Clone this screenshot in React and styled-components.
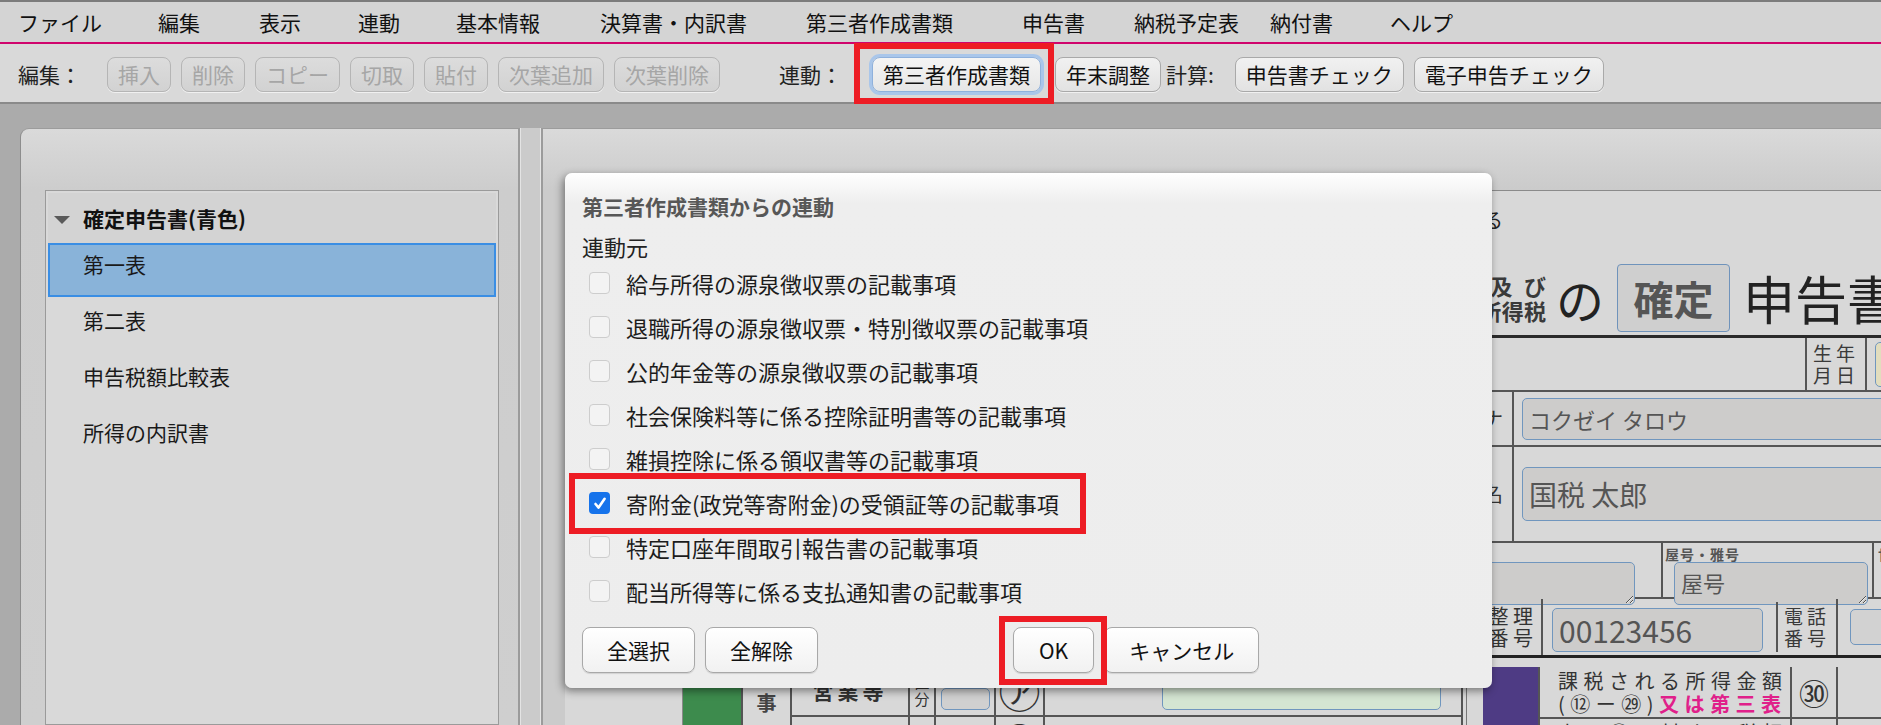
import React from "react";
import styled, { createGlobalStyle, css } from "styled-components";

const GlobalStyle = createGlobalStyle`
  html, body { margin: 0; padding: 0; }
  body {
    font-family: "Noto Sans CJK JP", "Noto Sans", sans-serif;
    background: #ababab;
    overflow: hidden;
  }
  * { box-sizing: border-box; }
`;

const Page = styled.div`
  position: relative;
  width: 1881px;
  height: 725px;
  overflow: hidden;
  display: flex;
  flex-direction: column;
  font-size: 21px;
  color: #111;
  background: #ababab;
`;

/* ---------- menu bar ---------- */
const MenuBar = styled.nav`
  height: 44px;
  flex-shrink: 0;
  display: flex;
  align-items: center;
  padding-left: 18px;
  background: #d4d4d4;
  border-top: 2px solid #7c7c7c;
  border-bottom: 2px solid #d0056d;
`;
const MenuItem = styled.span`
  margin-left: ${(p) => p.$ml}px;
  font-size: 21px;
  line-height: 28px;
  color: #111;
  white-space: nowrap;
`;

/* ---------- toolbar ---------- */
const Toolbar = styled.div`
  height: 60px;
  flex-shrink: 0;
  display: flex;
  align-items: center;
  padding: 2px 0 0 18px;
  background: #d9d9d9;
  border-bottom: 2px solid #8a8a8a;
`;
const ToolLabel = styled.span`
  margin-left: ${(p) => p.$ml || 0}px;
  font-size: 21px;
  line-height: 30px;
  color: #222;
  white-space: nowrap;
`;
const ToolButton = styled.button`
  margin-left: ${(p) => p.$ml ?? 10}px;
  height: 35px;
  padding: 0 10px;
  font-family: inherit;
  font-size: 21px;
  line-height: 33px;
  white-space: nowrap;
  border-radius: 8px;
  border: 1px solid #a9a9a9;
  color: #111;
  background: linear-gradient(#f1f1f1, #e2e2e2);
  box-shadow: 0 1px 0 rgba(255, 255, 255, 0.6);
  ${(p) =>
    p.disabled &&
    css`
      color: #a6a6a6;
      border-color: #b5b5b5;
      background: linear-gradient(#dcdcdc, #d2d2d2);
    `}
  ${(p) =>
    p.$focused &&
    css`
      border-color: #8fb1dc;
      background: linear-gradient(#f4f4f4, #e6e6e6);
      box-shadow: 0 0 0 3px #a9c6ea;
    `}
`;

/* red annotation frames */
const Marked = styled.span`
  position: relative;
  display: ${(p) => (p.$block ? "flex" : "inline-flex")};
  width: ${(p) => (p.$block ? "fit-content" : "auto")};
  margin-left: ${(p) => p.$ml || 0}px;
  &::after {
    content: "";
    position: absolute;
    top: ${(p) => p.$t}px;
    right: ${(p) => p.$r}px;
    bottom: ${(p) => p.$b}px;
    left: ${(p) => p.$l}px;
    border: 6px solid #ed1c24;
    pointer-events: none;
    z-index: 5;
  }
`;

/* ---------- workspace ---------- */
const Workspace = styled.div`
  flex: 1;
  display: flex;
  padding-top: 24px;
  min-height: 0;
`;
const LeftPanel = styled.aside`
  margin-left: 20px;
  width: 498px;
  flex-shrink: 0;
  border-radius: 9px 0 0 0;
  border-top: 1px solid #9c9c9c;
  border-left: 1px solid #8d8d8d;
  background: linear-gradient(#dadada 0, #cdcdcd 60px, #cfcfcf 100%);
  padding: 61px 19px 0 24px;
  display: flex;
  flex-direction: column;
`;
const Splitter = styled.div`
  width: 25px;
  flex-shrink: 0;
  background: #cbcbcb;
  border-left: 2px solid #9b9b9b;
  border-right: 2px solid #9b9b9b;
  box-shadow: inset 1px 0 0 #e4e4e4, inset -1px 0 0 #e4e4e4;
`;
const Tree = styled.div`
  flex: 1;
  border: 1px solid #9a9a9a;
  background: #d9d9d9;
  padding: 2px;
`;
const TreeHeader = styled.div`
  height: 50px;
  display: flex;
  align-items: center;
  padding-left: 6px;
  background: #d3d3d3;
  font-weight: 700;
  font-size: 21px;
  color: #111;
`;
const Caret = styled.span`
  width: 0;
  height: 0;
  border-left: 8px solid transparent;
  border-right: 8px solid transparent;
  border-top: 8px solid #5a5a5a;
  margin: 4px 13px 0 0;
`;
const TreeRow = styled.div`
  height: 56px;
  padding: 6px 0 0 35px;
  line-height: 30px;
  font-size: 21px;
  color: #1a1a1a;
  ${(p) =>
    p.$selected &&
    css`
      height: 54px;
      margin-bottom: 2px;
      background: #89b3d9;
      box-shadow: inset 0 0 0 2px #3a8ee4;
    `}
`;

const RightPanel = styled.main`
  flex: 1;
  min-width: 0;
  overflow: hidden;
  border-top: 1px solid #9c9c9c;
  background: linear-gradient(#dadada 0, #cbcbcb 60px, #cbcbcb 100%);
  padding: 61px 0 0 22px;
`;

/* ---------- form sheet (behind dialog) ---------- */
const Sheet = styled.div`
  width: 1500px;
  background: #d8d8d8;
  border-top: 1px solid #8a8a8a;
  color: #333;
`;
const HeaderBlock = styled.div`
  height: 147px;
  border-bottom: 3px solid #2a2a2a;
`;
const NoteLine = styled.div`
  width: 938px;
  padding-top: 14px;
  line-height: 30px;
  font-size: 20px;
  text-align: right;
  color: #222;
  white-space: nowrap;
  overflow: hidden;
`;
const TitleLine = styled.div`
  display: flex;
  align-items: center;
  height: 70px;
  margin-top: 28px;
`;
const TwoLine = styled.div`
  margin-left: 825px;
  width: 156px;
  font-size: 22px;
  line-height: 25px;
  font-weight: 700;
  color: #3a3a3a;
  text-align: justify;
  text-align-last: justify;
`;
const TitleNo = styled.span`
  margin-left: 10px;
  font-size: 48px;
  line-height: 60px;
  color: #222;
`;
const KindBox = styled.div`
  margin-left: 13px;
  width: 113px;
  height: 68px;
  display: flex;
  align-items: center;
  justify-content: center;
  border: 1px solid #6f93bb;
  border-radius: 4px;
  background: #cfcfcf;
  font-size: 40px;
  font-weight: 700;
  color: #555;
`;
const TitleText = styled.span`
  margin-left: 13px;
  font-size: 52px;
  line-height: 60px;
  color: #222;
  white-space: nowrap;
`;

const FormRow = styled.div`
  display: flex;
  align-items: ${(p) => p.$align || "center"};
  height: ${(p) => p.$h}px;
  border-bottom: ${(p) => p.$line || 2}px solid ${(p) => (p.$line === 3 ? "#222" : "#555")};
`;
const Spacer = styled.div`
  width: ${(p) => p.$w}px;
  flex-shrink: 0;
  align-self: stretch;
  border-right: ${(p) => (p.$line ? "1px solid #8a8a8a" : "none")};
`;
const LabelCell = styled.div`
  width: ${(p) => p.$w}px;
  flex-shrink: 0;
  align-self: stretch;
  display: flex;
  align-items: center;
  justify-content: flex-end;
  padding-right: ${(p) => p.$pr ?? 9}px;
  border-right: 2px solid #555;
  font-size: 20px;
  line-height: 22px;
  color: #333;
  text-align: right;
  white-space: pre;
`;
const StackLabel = styled.div`
  width: ${(p) => p.$w}px;
  flex-shrink: 0;
  align-self: stretch;
  display: flex;
  flex-direction: column;
  align-items: center;
  justify-content: center;
  border-left: ${(p) => (p.$bl ? "2px solid #555" : "none")};
  border-right: 2px solid #555;
  font-size: 19px;
  line-height: 22px;
  letter-spacing: 4px;
  color: #3a3a3a;
`;
const Field = styled.div`
  flex-shrink: 0;
  margin-left: ${(p) => p.$ml ?? 8}px;
  margin-top: ${(p) => p.$mt ?? 0}px;
  width: ${(p) => p.$w}px;
  height: ${(p) => p.$h}px;
  align-self: ${(p) => (p.$bottom ? "flex-end" : "auto")};
  margin-bottom: ${(p) => (p.$bottom ? 5 : 0)}px;
  display: flex;
  align-items: center;
  padding-left: 6px;
  border: 1px solid #7096be;
  border-radius: 5px;
  background: ${(p) => p.$bg || "#cdcccb"};
  font-size: ${(p) => p.$fs || 22}px;
  color: #555;
  white-space: nowrap;
  overflow: hidden;
`;
const Area = styled.textarea`
  flex-shrink: 0;
  margin-left: ${(p) => p.$ml ?? 0}px;
  width: ${(p) => p.$w}px;
  height: 43px;
  padding: 4px 6px;
  border: 1px solid #7096be;
  border-radius: 5px;
  background: #cdcccb;
  font-family: inherit;
  font-size: 22px;
  line-height: 30px;
  color: #555;
  resize: both;
  outline: none;
`;
const SmallCell = styled.div`
  width: ${(p) => p.$w}px;
  flex-shrink: 0;
  align-self: stretch;
  border-right: ${(p) => (p.$noRight ? "none" : "2px solid #555")};
  display: flex;
  flex-direction: column;
  align-items: flex-start;
  padding: 3px 0 0 ${(p) => p.$pl ?? 0}px;
`;
const TinyLabel = styled.div`
  margin-left: ${(p) => p.$ml || 0}px;
  font-size: 14px;
  line-height: 16px;
  font-weight: 700;
  color: #555;
  letter-spacing: 1px;
  white-space: nowrap;
`;

const Bottom = styled.div`
  display: flex;
  align-items: flex-start;
`;
const LeftCol = styled.div`
  width: 898px;
  margin-top: 7px;
  display: flex;
  border-right: 2px solid #555;
  box-shadow: 3px 0 0 #d8d8d8, 4px 0 0 #777;
`;
const ColorBar = styled.div`
  width: ${(p) => p.$w}px;
  flex-shrink: 0;
  align-self: stretch;
  min-height: 200px;
  background: ${(p) => p.$c};
`;
const VertLabel = styled.div`
  width: 51px;
  flex-shrink: 0;
  border-left: 2px solid #555;
  border-right: 2px solid #555;
  padding-top: 13px;
  display: flex;
  flex-direction: column;
  align-items: center;
  font-size: 20px;
  line-height: 50px;
  font-weight: 700;
  color: #444;
`;
const Rows = styled.div`
  flex: 1;
  display: flex;
  flex-direction: column;
`;
const ItemRow = styled.div`
  display: flex;
  height: ${(p) => p.$h}px;
  border-bottom: 2px solid #555;
`;
const Cell = styled.div`
  width: ${(p) => (p.$w ? `${p.$w}px` : "auto")};
  flex: ${(p) => (p.$w ? "0 0 auto" : "1")};
  display: flex;
  flex-direction: ${(p) => (p.$col ? "column" : "row")};
  align-items: center;
  justify-content: ${(p) => p.$justify || "center"};
  border-right: ${(p) => (p.$noRight ? "none" : "2px solid #555")};
  font-size: ${(p) => p.$fs || 20}px;
  line-height: ${(p) => p.$lh || 22}px;
  font-weight: ${(p) => (p.$bold ? 700 : 400)};
  letter-spacing: ${(p) => p.$ls || 0}px;
  color: #333;
  white-space: nowrap;
`;
const RightCol = styled.div`
  margin-left: 20px;
  margin-top: 9px;
  display: flex;
  flex: 1;
`;
const RightRows = styled.div`
  flex: 1;
  display: flex;
  flex-direction: column;
  border-left: 2px solid #555;
`;
const TaxLabel = styled.div`
  width: 252px;
  flex-shrink: 0;
  padding: 2px 0 0 18px;
  border-right: 2px solid #555;
  font-size: 20px;
  line-height: 23px;
  letter-spacing: 5.5px;
  color: #333;
  white-space: nowrap;
  overflow: hidden;
`;
const Pink = styled.span`
  color: #e0208a;
  font-weight: 700;
`;

/* ---------- dialog ---------- */
const Dialog = styled.section`
  position: absolute;
  left: 565px;
  top: 173px;
  width: 927px;
  height: 515px;
  z-index: 3;
  padding: 18px 0 14px 0;
  border-radius: 7px;
  background: linear-gradient(#ffffff 0, #eeeeee 30px, #ededed 100%);
  box-shadow: -2px 3px 8px rgba(0, 0, 0, 0.45);
  display: flex;
  flex-direction: column;
`;
const DialogTitle = styled.h2`
  margin: 0;
  padding-left: 17px;
  font-size: 21px;
  line-height: 30px;
  font-weight: 700;
  color: #575757;
`;
const SourceLabel = styled.div`
  margin-top: 10px;
  padding-left: 17px;
  font-size: 22px;
  line-height: 30px;
  color: #222;
`;
const CheckList = styled.div`
  padding-left: 24px;
  display: flex;
  flex-direction: column;
`;
const CheckItem = styled.label`
  height: 44px;
  display: flex;
  align-items: center;
  gap: 16px;
  font-size: 22px;
  color: #1c1c1c;
  white-space: nowrap;
`;
const Box = styled.span`
  width: 21px;
  height: 22px;
  flex-shrink: 0;
  border-radius: 4px;
  border: 1.5px solid #cdcdcd;
  background: #f3f3f3;
  display: flex;
  align-items: center;
  justify-content: center;
  ${(p) =>
    p.$checked &&
    css`
      border: none;
      background: #1673eb;
    `}
`;
const ButtonRow = styled.div`
  margin-top: 14px;
  padding-left: 17px;
  display: flex;
  align-items: center;
`;
const DlgButton = styled.button`
  margin-left: ${(p) => p.$ml ?? 0}px;
  height: 46px;
  padding: 0 ${(p) => p.$px ?? 24}px;
  border: 1px solid #a8a8a8;
  border-radius: 8px;
  background: linear-gradient(#ffffff, #f1f1f1);
  box-shadow: 0 1px 1px rgba(0, 0, 0, 0.12);
  font-family: inherit;
  font-size: 21px;
  color: #111;
  white-space: nowrap;
`;

const Check = () => (
  <svg width="14" height="15" viewBox="0 0 14 15">
    <path d="M2.5 8 L5.6 11.6 L11.6 2.8" fill="none" stroke="#fff" strokeWidth="2.6" strokeLinecap="round" strokeLinejoin="round" />
  </svg>
);

const menus = [
  ["ファイル", 0],
  ["編集", 56],
  ["表示", 59],
  ["連動", 57],
  ["基本情報", 56],
  ["決算書・内訳書", 60],
  ["第三者作成書類", 59],
  ["申告書", 69],
  ["納税予定表", 49],
  ["納付書", 31],
  ["ヘルプ", 57],
];
const editButtons = ["挿入", "削除", "コピー", "切取", "貼付", "次葉追加", "次葉削除"];
const sources = [
  "給与所得の源泉徴収票の記載事項",
  "退職所得の源泉徴収票・特別徴収票の記載事項",
  "公的年金等の源泉徴収票の記載事項",
  "社会保険料等に係る控除証明書等の記載事項",
  "雑損控除に係る領収書等の記載事項",
  "寄附金(政党等寄附金)の受領証等の記載事項",
  "特定口座年間取引報告書の記載事項",
  "配当所得等に係る支払通知書の記載事項",
];
const incomeRows = [
  { name: "営業等", mark: "㋐" },
  { name: "農業", mark: "㋑" },
];

export default function App() {
  return (
    <Page>
      <GlobalStyle />
      <MenuBar>
        {menus.map(([m, ml]) => (
          <MenuItem key={m} $ml={ml}>
            {m}
          </MenuItem>
        ))}
      </MenuBar>

      <Toolbar>
        <ToolLabel>編集：</ToolLabel>
        {editButtons.map((b, i) => (
          <ToolButton key={b} disabled $ml={i === 0 ? 26 : 10}>
            {b}
          </ToolButton>
        ))}
        <ToolLabel $ml={59}>連動：</ToolLabel>
        <Marked $ml={30} $t={-14} $r={-13} $b={-12} $l={-18}>
          <ToolButton $focused $ml={0}>第三者作成書類</ToolButton>
        </Marked>
        <ToolButton $ml={14}>年末調整</ToolButton>
        <ToolLabel $ml={5}>計算:</ToolLabel>
        <ToolButton $ml={21}>申告書チェック</ToolButton>
        <ToolButton $ml={10}>電子申告チェック</ToolButton>
      </Toolbar>

      <Workspace>
        <LeftPanel>
          <Tree>
            <TreeHeader>
              <Caret />
              確定申告書(青色)
            </TreeHeader>
            <TreeRow $selected>第一表</TreeRow>
            <TreeRow>第二表</TreeRow>
            <TreeRow>申告税額比較表</TreeRow>
            <TreeRow>所得の内訳書</TreeRow>
          </Tree>
        </LeftPanel>
        <Splitter />
        <RightPanel>
          <Sheet>
            <HeaderBlock>
              <NoteLine>令和05年分の所得税及び復興特別所得税の申告をする</NoteLine>
              <TitleLine>
                <TwoLine>
                  <div>所得税及び</div>
                  <div>復興特別所得税</div>
                </TwoLine>
                <TitleNo>の</TitleNo>
                <KindBox>確定</KindBox>
                <TitleText>申告書</TitleText>
              </TitleLine>
            </HeaderBlock>

            <FormRow $h={54}>
              <Spacer $w={1240} />
              <StackLabel $w={62} $bl>
                <div>生年</div>
                <div>月日</div>
              </StackLabel>
              <Field $w={220} $h={45} $bg="#e2ddbd" />
            </FormRow>

            <FormRow $h={55}>
              <LabelCell $w={949}>フリガナ</LabelCell>
              <Field $w={600} $h={42}>コクゼイ タロウ</Field>
            </FormRow>

            <FormRow $h={96}>
              <LabelCell $w={949}>氏　　名</LabelCell>
              <Field $w={600} $h={54} $fs={28}>国税 太郎</Field>
            </FormRow>

            <FormRow $h={56} $align="stretch">
              <SmallCell $w={1098}>
                <TinyLabel $ml={760}>職業</TinyLabel>
                <Area readOnly $w={300} $ml={770} />
              </SmallCell>
              <SmallCell $w={211} $pl={2}>
                <TinyLabel>屋号・雅号</TinyLabel>
                <Area readOnly $w={194} $ml={9} defaultValue="屋号" />
              </SmallCell>
              <SmallCell $w={300} $pl={4} $noRight>
                <TinyLabel>世帯主の氏名</TinyLabel>
              </SmallCell>
            </FormRow>

            <FormRow $h={59} $line={3}>
              <LabelCell $w={978} $pr={8}>
                <div>
                  <div>整 理</div>
                  <div>番 号</div>
                </div>
              </LabelCell>
              <Cell $w={235} $justify="flex-start">
                <Field $w={211} $h={44} $ml={9} $mt={6} $fs={30}>00123456</Field>
              </Cell>
              <StackLabel $w={60}>
                <div>電話</div>
                <div>番号</div>
              </StackLabel>
              <Field $w={300} $h={36} $ml={12} $bg="#d2d2d2" />
            </FormRow>

            <Bottom>
              <LeftCol>
                <Spacer $w={118} $line />
                <ColorBar $w={58} $c="#3d8b4d" />
                <VertLabel>
                  <div>事</div>
                  <div>業</div>
                </VertLabel>
                <Rows>
                  {incomeRows.map((r) => (
                    <ItemRow key={r.name} $h={52}>
                      <Cell $w={118} $fs={21} $ls={4} $bold>{r.name}</Cell>
                      <Cell $w={26} $col $fs={15} $lh={17}>
                        <div>区</div>
                        <div>分</div>
                      </Cell>
                      <Cell $w={60}>
                        <Field $w={49} $h={22} $ml={0} $bottom $bg="#d0d0d0" />
                      </Cell>
                      <Cell $w={49} $fs={42} $lh={44}>{r.mark}</Cell>
                      <Cell $justify="flex-start" $noRight>
                        <Field $w={279} $h={27} $ml={117} $bottom $bg="#d4e5d2" />
                      </Cell>
                    </ItemRow>
                  ))}
                </Rows>
              </LeftCol>
              <RightCol>
                <ColorBar $w={55} $c="#4e3b84" />
                <RightRows>
                  <ItemRow $h={52}>
                    <TaxLabel>
                      <div>課税される所得金額</div>
                      <div>
                        (⑫ー㉙)<Pink>又は第三表</Pink>
                      </div>
                    </TaxLabel>
                    <Cell $w={46} $fs={30} $lh={32}>㉚</Cell>
                    <Cell $noRight />
                  </ItemRow>
                  <ItemRow $h={52}>
                    <TaxLabel>
                      <div>上の㉚に対する税額</div>
                    </TaxLabel>
                    <Cell $w={46} $fs={30} $lh={32}>㉛</Cell>
                    <Cell $noRight />
                  </ItemRow>
                </RightRows>
              </RightCol>
            </Bottom>
          </Sheet>
        </RightPanel>
      </Workspace>

      <Dialog>
        <DialogTitle>第三者作成書類からの連動</DialogTitle>
        <SourceLabel>連動元</SourceLabel>
        <CheckList>
          {sources.map((s, i) =>
            i === 5 ? (
              <Marked key={s} $block $t={-8} $r={-27} $b={-9} $l={-20}>
                <CheckItem>
                  <Box $checked>
                    <Check />
                  </Box>
                  {s}
                </CheckItem>
              </Marked>
            ) : (
              <CheckItem key={s}>
                <Box />
                {s}
              </CheckItem>
            )
          )}
        </CheckList>
        <ButtonRow>
          <DlgButton>全選択</DlgButton>
          <DlgButton $ml={10}>全解除</DlgButton>
          <Marked $ml={195} $t={-11} $r={-13} $b={-12} $l={-14}>
            <DlgButton $px={25}>OK</DlgButton>
          </Marked>
          <DlgButton $ml={10}>キャンセル</DlgButton>
        </ButtonRow>
      </Dialog>
    </Page>
  );
}
